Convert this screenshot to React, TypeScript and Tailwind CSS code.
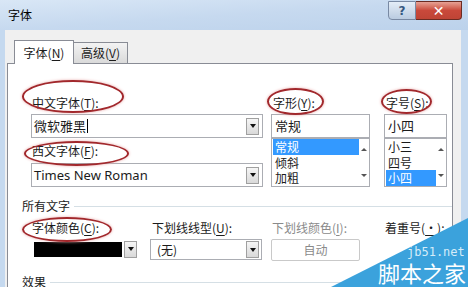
const DropButton = () => (
    <div className="flex h-[17px] w-[13px] shrink-0 items-center justify-center border border-[#a0a0a0] bg-gradient-to-b from-[#f6f6f6] to-[#d9d9d9]">
        <div className="h-0 w-0 border-x-[3.5px] border-t-[4px] border-x-transparent border-t-[#111]" />
    </div>
);

const ScrollArrows = () => (
    <div className="flex w-[10px] flex-col items-center justify-between py-[9px]">
        <div className="h-0 w-0 border-x-[3px] border-b-[3px] border-x-transparent border-b-[#555]" />
        <div className="h-0 w-0 border-x-[3px] border-t-[3px] border-x-transparent border-t-[#555]" />
    </div>
);

const Combo = ({ text, caret, className }: { text: string; caret?: boolean; className?: string }) => (
    <div className={`flex h-[24px] items-center border border-[#abadb3] bg-white pl-[2px] pr-[3px] ${className || ""}`}>
        <span className="flex flex-1 items-center text-[13px] leading-[18px] font-['Noto_Sans','Noto_Sans_CJK_SC',sans-serif]">
            {text}
            {caret && <span className="ml-[1px] h-[14px] w-px bg-black" />}
        </span>
        <DropButton />
    </div>
);

const Label = ({ pre, key1, post = ":", className }: { pre: string; key1: string; post?: string; className?: string }) => (
    <div className={`h-[18px] text-[12px] leading-[18px] whitespace-nowrap ${className || ""}`}>
        {pre}(<span className="underline underline-offset-2">{key1}</span>){post}
    </div>
);

const ListBox = ({ items, selected, className }: { items: string[]; selected: number; className?: string }) => (
    <div className={`flex h-[49px] border border-[#abadb3] bg-white ${className || ""}`}>
        <div className="flex flex-1 flex-col pl-[1px]">
            {items.map((it, i) => (
                <div
                    key={it}
                    className={`h-[16px] overflow-hidden pl-[2px] text-[12px] leading-[16px] ${i === selected ? "bg-[#3399ff] text-white" : ""}`}
                >
                    {it}
                </div>
            ))}
        </div>
        <ScrollArrows />
    </div>
);

const Ellipse = ({ className }: { className: string }) => (
    <div className={`pointer-events-none absolute rounded-[50%] border-[2.5px] border-[#a2282c] shadow-[0_0_3px_#e9a9a9] ${className}`} />
);

export default function App() {
    return (
        <div className="relative h-[287px] w-[468px] overflow-hidden bg-[#c5d9ef] font-['Noto_Sans_CJK_SC',sans-serif] text-[12px] text-[#1b1b1b]">
            {/* title bar */}
            <div className="flex h-[30px] items-start justify-between bg-gradient-to-br from-[#d9e7f6] via-[#c6d9ef] to-[#bcd2eb]">
                <span className="ml-[8px] mt-[6px] text-[12px] leading-[18px] text-black">字体</span>
                <div className="mr-[6px] mt-[1px] flex">
                    <div className="flex h-[19px] w-[28px] items-center justify-center rounded-bl-[4px] border border-[#7889a3] bg-gradient-to-b from-[#e4edf7] to-[#b9cbe0] text-[12px] leading-none font-bold text-[#34577f] font-['DejaVu_Sans',sans-serif]">
                        ?
                    </div>
                    <div className="flex h-[19px] w-[46px] items-center justify-center rounded-br-[4px] border border-l-0 border-[#6b2b22] bg-gradient-to-b from-[#e6a195] via-[#c9493b] to-[#bf4435] text-[14px] leading-none font-bold text-white font-['DejaVu_Sans',sans-serif]">
                        ✕
                    </div>
                </div>
            </div>

            {/* dialog body */}
            <div className="ml-[5px] h-[257px] w-[456px] bg-[#f0f0f0] pl-[2px] pt-[10px]">
                <div className="flex items-end pl-[7px]">
                    <div className="relative z-10 -mb-px flex h-[24px] w-[60px] items-center justify-center border border-b-0 border-[#898c95] bg-white leading-[18px]">
                        字体(<span className="underline underline-offset-2">N</span>)
                    </div>
                    <div className="flex h-[21px] w-[54px] items-center justify-center border border-l-0 border-b-0 border-[#898c95] bg-gradient-to-b from-[#f3f3f3] to-[#dadada] leading-[18px]">
                        高级(<span className="underline underline-offset-2">V</span>)
                    </div>
                </div>

                <div className="h-[240px] w-[446px] border border-[#898c95] bg-white pl-[14px] pt-[30px]">
                    {/* font pickers */}
                    <div className="ml-[9px] flex">
                        <div className="w-[232px]">
                            <Label pre="中文字体" key1="T" className="pl-[1px]" />
                            <Combo text="微软雅黑" caret className="mt-[2px]" />
                            <Label pre="西文字体" key1="F" className="mt-[4px] pl-[1px]" />
                            <Combo text="Times New Roman" className="mt-[3px]" />
                        </div>
                        <div className="ml-[8px] w-[99px]">
                            <Label pre="字形" key1="Y" className="pl-[2px]" />
                            <div className="mt-[2px] flex h-[24px] items-center border border-[#abadb3] pl-[3px] text-[13px] leading-[18px]">常规</div>
                            <ListBox items={["常规", "倾斜", "加粗"]} selected={0} />
                        </div>
                        <div className="ml-[14px] w-[63px]">
                            <Label pre="字号" key1="S" className="pl-[2px]" />
                            <div className="mt-[2px] flex h-[24px] items-center border border-[#abadb3] pl-[3px] text-[13px] leading-[18px]">小四</div>
                            <ListBox items={["小三", "四号", "小四"]} selected={2} />
                        </div>
                    </div>

                    {/* all text group */}
                    <div className="mt-[11px] flex h-[16px] items-center">
                        <span className="leading-[16px]">所有文字</span>
                        <div className="ml-[4px] h-px flex-1 bg-[#d5dfe5]" />
                    </div>
                    <div className="ml-[10px] mt-[5px] flex">
                        <div className="w-[118px]">
                            <Label pre="字体颜色" key1="C" />
                            <div className="ml-[2px] mt-[2px] flex h-[20px] w-[106px] items-center">
                                <div className="h-[15px] w-[88px] bg-black" />
                                <div className="ml-[2px]">
                                    <DropButton />
                                </div>
                            </div>
                        </div>
                        <div className="w-[121px]">
                            <Label pre="下划线线型" key1="U" className="pl-[2px]" />
                            <div className="mt-[2px] flex h-[21px] w-[112px] items-center border border-[#abadb3] pl-[6px] pr-[2px]">
                                <span className="flex-1 text-[12px] leading-[16px]">(无)</span>
                                <DropButton />
                            </div>
                        </div>
                        <div className="w-[114px]">
                            <Label pre="下划线颜色" key1="I" className="pl-[1px] text-[#8a8a8a]" />
                            <div className="mt-[2px] flex h-[22px] w-[89px] items-center justify-center rounded-[2px] border border-[#c9c9c9] text-[12px] text-[#8a8a8a]">
                                自动
                            </div>
                        </div>
                        <div>
                            <Label pre="着重号" key1="·" />
                        </div>
                    </div>

                    <div className="mt-[13px] flex h-[16px] items-center">
                        <span className="leading-[16px]">效果</span>
                        <div className="ml-[4px] h-px flex-1 bg-[#d5dfe5]" />
                    </div>
                </div>
            </div>

            {/* red annotation ellipses */}
            <Ellipse className="left-[22px] top-[80px] h-[33px] w-[102px]" />
            <Ellipse className="left-[24px] top-[141px] h-[25px] w-[105px]" />
            <Ellipse className="left-[267px] top-[88px] h-[27px] w-[57px]" />
            <Ellipse className="left-[381px] top-[89px] h-[25px] w-[51px]" />
            <Ellipse className="left-[22px] top-[217px] h-[25px] w-[90px]" />

            {/* watermark */}
            <svg className="pointer-events-none absolute left-0 top-0" width="468" height="287" viewBox="0 0 468 287">
                <polygon points="331,287 468,218 468,287" fill="#3ba2dc" />
            </svg>
            <span className="absolute left-[407px] top-[244px] text-[12px] leading-[16px] text-[#d5ecf9] font-['DejaVu_Sans_Mono',monospace]">
                jb51.net
            </span>
            <span className="absolute left-[378px] top-[259px] text-[22px] leading-[26px] text-white">脚本之家</span>
        </div>
    );
}
